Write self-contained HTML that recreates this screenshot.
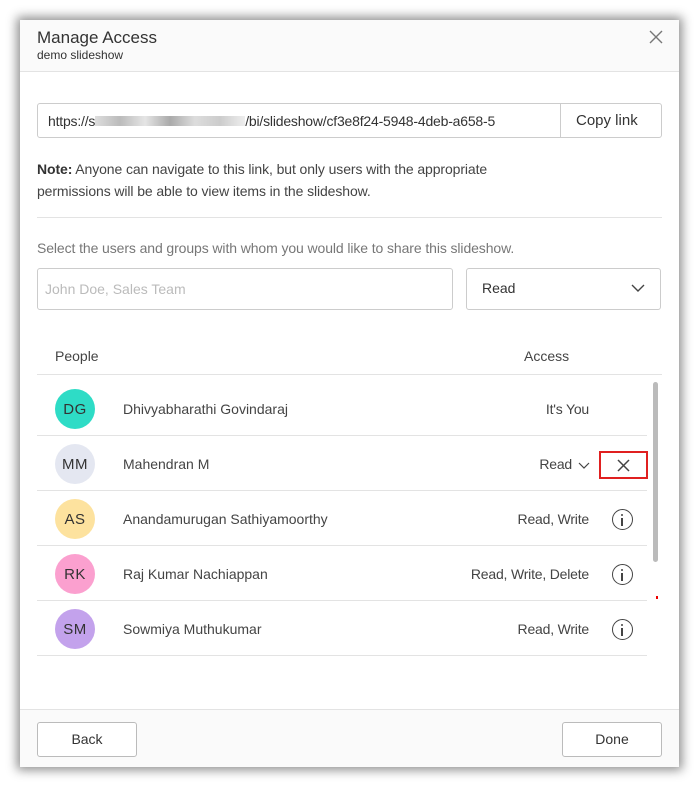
<!DOCTYPE html>
<html><head><style>
*{box-sizing:border-box;margin:0;padding:0}
body{width:699px;height:787px;background:#fff;font-family:"Liberation Sans",sans-serif;position:relative;overflow:hidden;color:#333}
.dlg{position:absolute;left:20px;top:20px;width:659px;height:747px;background:#fff;box-shadow:0 0 10px 3px rgba(0,0,0,.45)}
.a{position:absolute}
.hdr{left:0;top:0;width:659px;height:52px;background:#fafafa;border-bottom:1px solid #e3e3e3}
.t{font-size:14px;color:#444}
.row{position:absolute;left:17px;width:610px;height:55px;border-bottom:1px solid #e3e3e3}
.av{position:absolute;left:18px;top:8px;width:40px;height:40px;border-radius:50%;font-size:15px;text-align:center;line-height:42px;color:#333;letter-spacing:.5px}
.nm{position:absolute;left:86px;top:20px;font-size:14px;color:#444}
.ac{position:absolute;right:58px;top:20px;font-size:14px;color:#444;letter-spacing:-.2px}
.info{position:absolute;left:575px;top:18px;width:21px;height:21px;border:1.6px solid #444;border-radius:50%}
.info:before{content:"";position:absolute;left:8px;top:3.5px;width:2px;height:2px;background:#444;border-radius:1px}
.info:after{content:"";position:absolute;left:8px;top:7.5px;width:2px;height:8px;background:#444}
.btn{position:absolute;top:702px;width:100px;height:35px;border:1px solid #bbb;border-radius:3px;font-size:14px;text-align:center;line-height:33px;color:#333}
</style></head><body>
<div class="dlg">
<div class="a hdr"></div>
<div class="a" style="left:17px;top:8px;font-size:17px;color:#333">Manage Access</div>
<div class="a" style="left:17px;top:28px;font-size:12px;color:#333">demo slideshow</div>
<svg class="a" style="left:629px;top:10px" width="14" height="14"><path d="M1 1L13 13M13 1L1 13" stroke="#777" stroke-width="1.4"/></svg>

<div class="a" style="left:17px;top:83px;width:625px;height:35px;border:1px solid #ccc;border-radius:3px"></div>
<div class="a" style="left:540px;top:83px;width:1px;height:35px;background:#ccc"></div>
<div class="a t" style="left:28px;top:93px;white-space:nowrap;width:505px;overflow:hidden;color:#333;letter-spacing:-.2px">https://s<span style="display:inline-block;width:150px;height:10px;background:linear-gradient(90deg,#ddd,#bbb,#e5e5e5,#aaa,#ddd,#ccc,#eee)"></span>/bi/slideshow/cf3e8f24-5948-4deb-a658-5</div>
<div class="a" style="left:556px;top:92px;font-size:15px;color:#333">Copy link</div>

<div class="a t" style="left:17px;top:138px;line-height:22px;width:510px;color:#444;letter-spacing:-.1px"><b style="color:#333">Note:</b> Anyone can navigate to this link, but only users with the appropriate permissions will be able to view items in the slideshow.</div>
<div class="a" style="left:17px;top:197px;width:625px;height:1px;background:#e3e3e3"></div>
<div class="a t" style="left:17px;top:220px;color:#777;letter-spacing:-.1px">Select the users and groups with whom you would like to share this slideshow.</div>
<div class="a" style="left:17px;top:248px;width:416px;height:42px;border:1px solid #ccc;border-radius:3px"></div>
<div class="a t" style="left:25px;top:261px;color:#bbb">John Doe, Sales Team</div>
<div class="a" style="left:446px;top:248px;width:195px;height:42px;border:1px solid #ccc;border-radius:3px"></div>
<div class="a t" style="left:462px;top:260px;color:#333">Read</div>
<svg class="a" style="left:611px;top:264px" width="14" height="9"><path d="M1 1L7 7L13 1" stroke="#444" stroke-width="1.4" fill="none"/></svg>

<div class="a t" style="left:35px;top:328px">People</div>
<div class="a t" style="left:504px;top:328px">Access</div>
<div class="a" style="left:17px;top:354px;width:625px;height:1px;background:#e3e3e3"></div>

<div class="row" style="top:361px"><div class="av" style="background:#2edcc6">DG</div><div class="nm">Dhivyabharathi Govindaraj</div><div class="ac">It's You</div></div>
<div class="row" style="top:416px"><div class="av" style="background:#e4e7f1">MM</div><div class="nm">Mahendran M</div><div class="ac" style="right:75px">Read</div>
<svg class="a" style="left:541px;top:26px" width="12" height="8"><path d="M1 1L6 6L11 1" stroke="#444" stroke-width="1.2" fill="none"/></svg>
<div class="a" style="left:562px;top:15px;width:49px;height:28px;border:2px solid #e02020"></div>
<svg class="a" style="left:580px;top:23px" width="13" height="13"><path d="M1 1L12 12M12 1L1 12" stroke="#444" stroke-width="1.5"/></svg></div>
<div class="row" style="top:471px"><div class="av" style="background:#fde29e">AS</div><div class="nm">Anandamurugan Sathiyamoorthy</div><div class="ac">Read, Write</div><div class="info"></div></div>
<div class="row" style="top:526px"><div class="av" style="background:#fba0cf">RK</div><div class="nm">Raj Kumar Nachiappan</div><div class="ac">Read, Write, Delete</div><div class="info"></div></div>
<div class="row" style="top:581px"><div class="av" style="background:#c3a2ec">SM</div><div class="nm">Sowmiya Muthukumar</div><div class="ac">Read, Write</div><div class="info"></div></div>
<div class="a" style="left:633px;top:362px;width:5px;height:180px;background:#bbb;border-radius:3px"></div>
<div class="a" style="left:636px;top:576px;width:2px;height:3px;background:#e00"></div>

<div class="a" style="left:0;top:689px;width:659px;height:58px;background:#fafafa;border-top:1px solid #e3e3e3"></div>
<div class="btn" style="left:17px;background:#fff">Back</div>
<div class="btn" style="left:542px;background:#fff">Done</div>
</div>
</body></html>
